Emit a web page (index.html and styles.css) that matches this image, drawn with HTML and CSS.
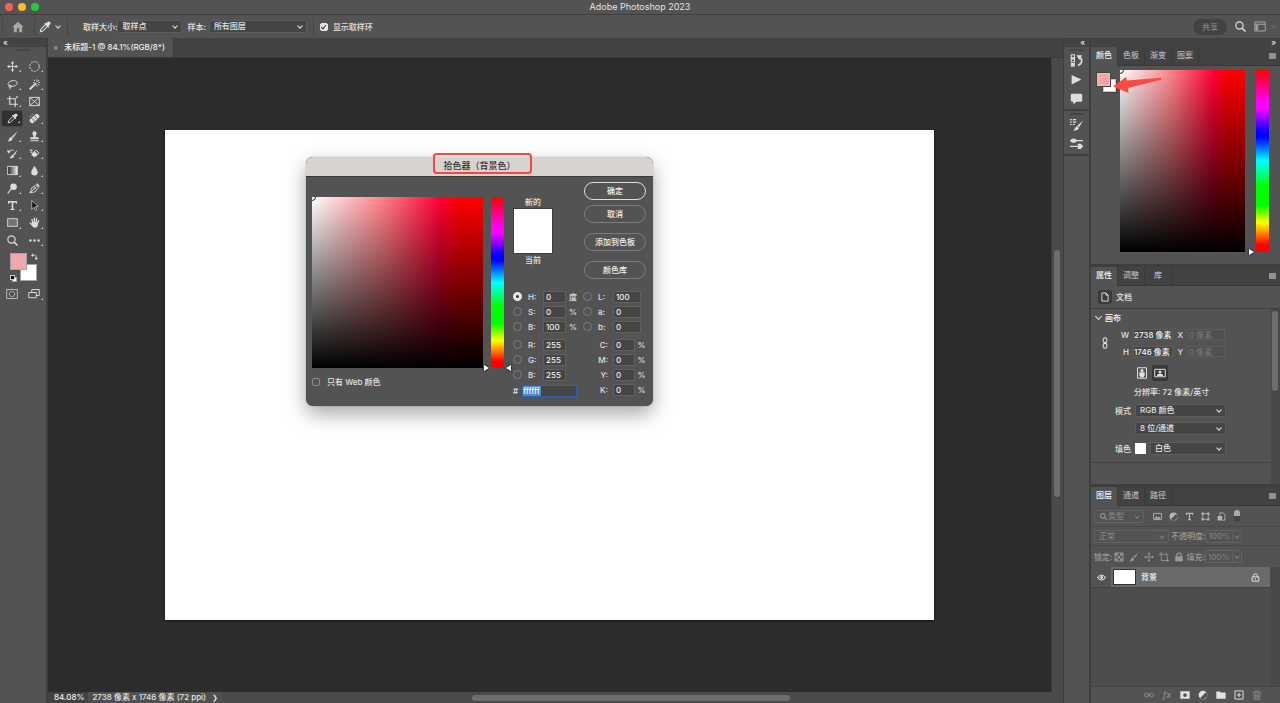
FILE: index.html
```
<!DOCTYPE html>
<html lang="zh-CN">
<head>
<meta charset="utf-8">
<title>Adobe Photoshop 2023</title>
<link rel="stylesheet" href="styles.css">
</head>
<body>
<svg class="sprite" aria-hidden="true">
  <symbol id="home" viewBox="0 0 16 16"><path fill="currentColor" d="M8 1 .5 8H2.500v7h4V9.500h3V15h4V8h2z"/></symbol>
  <symbol id="eyedropper" viewBox="0 0 16 16"><path fill="currentColor" d="M14.6 1.4a2.3 2.3 0 0 0-3.3 0L9.4 3.3l-1-.9L7 3.8 12.200 9l1.400-1.400-.9-1 1.900-1.900a2.300 2.300 0 0 0 0-3.300z"/><path fill="none" stroke="currentColor" stroke-width="1.400" d="M8.200 5.200 2.500 11l-.8 3.300 3.300-.8 5.700-5.700"/></symbol>
  <symbol id="move" viewBox="0 0 16 16"><path fill="none" stroke="currentColor" stroke-width="1.300" d="M8 2v12M2 8h12"/><path fill="currentColor" d="m8 0 2.500 3.500h-5zM8 16l2.500-3.500h-5zM0 8l3.500-2.500v5zM16 8l-3.500-2.500v5z"/></symbol>
  <symbol id="marquee" viewBox="0 0 16 16"><circle cx="8" cy="8" r="7" fill="none" stroke="currentColor" stroke-width="1.400" stroke-dasharray="3 1.400"/></symbol>
  <symbol id="lasso" viewBox="0 0 16 16"><g fill="none" stroke="currentColor" stroke-width="1.400"><path d="M5 10.500C1 10 .5 6 4 3.800 8 1.200 14.500 2 14.800 5.500 15 9 10 11.500 5.500 10.500"/><circle cx="4.500" cy="10.500" r="1.700"/><path d="M4.500 12c.8 1 .4 2.200-1 3"/></g></symbol>
  <symbol id="wand" viewBox="0 0 16 16"><path fill="none" stroke="currentColor" stroke-width="2.800" d="m1 15 9.500-9"/><path stroke="currentColor" stroke-width="1.400" d="M11.500.5v3M11.500 8.500v2.500M13.500 5H16M12.800 3.500l2-2M7 1l1.700 2M13 7l2 2M6 5.200h2"/></symbol>
  <symbol id="crop" viewBox="0 0 16 16"><path fill="none" stroke="currentColor" stroke-width="1.600" d="M4 0v12h12M0 4h12v12M13 3l3-3"/></symbol>
  <symbol id="frame" viewBox="0 0 16 16"><path fill="none" stroke="currentColor" stroke-width="1.400" d="M1 2h14v12H1zM1 2l14 12M15 2 1 14"/></symbol>
  <symbol id="heal" viewBox="0 0 16 16"><g transform="rotate(-42 8 8)"><rect x="0" y="4.500" width="16" height="7" rx="2.800" fill="currentColor"/><path d="M5 4.500v7M11 4.500v7" stroke="#535353"/><path d="M7 7h.8M9 9h.8M7 9.300h.8M9 6.800h.8" stroke="#535353"/></g><path d="M2 6c0-3 2-4 4-4" fill="none" stroke="currentColor" stroke-dasharray="1.500 1"/></symbol>
  <symbol id="brush" viewBox="0 0 16 16"><path fill="currentColor" d="M15.500.5 7 8l2 2zM6.300 8.700c-2 0-2.700 1.200-3 2.800C3 13 2 14 .5 14.500c3.200 1 7.500.2 7.700-3.800z"/></symbol>
  <symbol id="stamp" viewBox="0 0 16 16"><path fill="currentColor" d="M8 .5a3 3 0 0 0-2.500 4.800C6.400 6.700 6.500 8 6.200 9H2v3h12V9H9.800c-.3-1-.2-2.300.7-3.700A3 3 0 0 0 8 .5zM2 13.300h12V15H2z"/></symbol>
  <symbol id="history" viewBox="0 0 16 16"><path fill="currentColor" d="M15.500 2 9 9l2 1.800zM8.400 9.500c-2 .2-2 3.500-5 5 3.500 1 6.500-.3 6.800-3z"/><path d="M2 7c1-4 5-5 8-3" fill="none" stroke="currentColor" stroke-width="1.300"/><path d="m0 3 1.600 5 4-3z" fill="currentColor"/></symbol>
  <symbol id="eraser" viewBox="0 0 16 16"><path fill="none" stroke="currentColor" stroke-width="1.400" d="m5 8 5-5 4.500 4-5.500 5.500H7L4 10z"/><path fill="currentColor" d="m8 5-4 4 3 3.300h2L13 9zM1 2h4v2H1zM2 5h3v2H2z"/></symbol>
  <symbol id="gradient" viewBox="0 0 16 16"><linearGradient id="gr"><stop stop-color="#222"/><stop offset="1" stop-color="#eee"/></linearGradient><rect x="1" y="2" width="14" height="12" fill="url(#gr)" stroke="currentColor" stroke-width="1.300"/></symbol>
  <symbol id="drop" viewBox="0 0 16 16"><path fill="currentColor" d="M8 1C6 5 3.300 7.300 3.300 10.500a4.700 4.700 0 0 0 9.400 0C12.700 7.300 10 5 8 1z"/></symbol>
  <symbol id="dodge" viewBox="0 0 16 16"><circle cx="9.500" cy="5.500" r="4.800" fill="currentColor"/><path d="m6 9-5 6" stroke="currentColor" stroke-width="1.600"/></symbol>
  <symbol id="pen" viewBox="0 0 16 16"><g fill="none" stroke="currentColor" stroke-width="1.300"><path d="M1.500 14.500 4 7l6-4 3.500 3.500-4 6zM1.500 14.500 7.500 8.500"/><circle cx="8.500" cy="7.500" r="1.200"/><path d="m11 1 4 4" stroke-width="2"/></g></symbol>
  <symbol id="type" viewBox="0 0 16 16"><path fill="currentColor" d="M1.500 1.500h13v4h-1.500L12.200 3.500H9.200v9.200l1.800.5v1.300H5v-1.300l1.800-.5V3.500h-3L3 5.500H1.500z"/></symbol>
  <symbol id="pointer" viewBox="0 0 16 16"><path fill="#111" stroke="currentColor" d="M4 .8v13l3.200-3.300 2 4.500 2-1-2-4.300 4.300-.3z"/></symbol>
  <symbol id="rect" viewBox="0 0 16 16"><rect x="1" y="2.500" width="14" height="11" fill="#707070" stroke="currentColor" stroke-width="1.300"/></symbol>
  <symbol id="hand" viewBox="0 0 16 16"><path fill="none" stroke="currentColor" stroke-linecap="round" stroke-width="1.900" d="M5.500 9 4.300 3.500M7.800 8V1.500M10.300 8l.8-5.700M12.300 9.500l1.700-4.300M4.500 11.500 1.500 8.500"/><path fill="currentColor" d="M4.500 7.500h8.300l.3 2.500c0 3-1.500 5.500-4.500 5.500-2.500 0-4-1.500-5.500-4.500z"/></symbol>
  <symbol id="search" viewBox="0 0 16 16"><g fill="none" stroke="currentColor"><circle cx="6.500" cy="6.500" r="5.300" stroke-width="1.700"/><path stroke-width="2.200" d="m10.300 10.300 5 5"/></g></symbol>
  <symbol id="dots" viewBox="0 0 16 16"><g fill="currentColor"><circle cx="2" cy="8" r="1.800"/><circle cx="8" cy="8" r="1.800"/><circle cx="14" cy="8" r="1.800"/></g></symbol>
  <symbol id="mask" viewBox="0 0 16 16"><g fill="none" stroke="currentColor"><rect x="1" y="2" width="14" height="12"/><circle cx="8" cy="8" r="3.500" stroke-dasharray="1.500 .7" stroke-width="1.300"/></g></symbol>
  <symbol id="screens" viewBox="0 0 16 16"><g stroke="currentColor" stroke-width="1.300" fill="#535353"><path d="M5 2h10v8H5z"/><path d="M1 6h10v7H1z"/></g></symbol>
  <symbol id="swap" viewBox="0 0 16 16"><path fill="none" stroke="currentColor" stroke-width="1.800" d="M4 5h4q4 0 4 5v2"/><path fill="currentColor" d="M0 5 5 1v8zM12 16l-4-5h8z"/></symbol>
  <symbol id="workspace" viewBox="0 0 16 14"><path fill="none" stroke="currentColor" stroke-width="1.300" d="M1 1h14v12H1zM1 4h14M5 4v9"/><path fill="currentColor" d="M2 5h2v7H2z"/></symbol>
  <symbol id="histpanel" viewBox="0 0 16 16"><path fill="none" stroke="currentColor" stroke-width="1.300" d="M1.500 1h4v3.500h-4zM1.500 6h4v3.500h-4z"/><path fill="currentColor" d="M1 11h5v4.500H1z"/><path fill="none" stroke="currentColor" stroke-width="2" d="M10 14c6-2 5-8 2-10"/><path fill="currentColor" d="M8 1.500h7l-3.500 6z"/></symbol>
  <symbol id="play" viewBox="0 0 16 16"><path fill="currentColor" d="M2 2.500 14 8 2 14z"/></symbol>
  <symbol id="comment" viewBox="0 0 16 16"><path fill="currentColor" d="M2.500 2h11q1.500 0 1.500 1.500v7q0 1.500-1.500 1.500H8l-4 3.500V12H2.500Q1 12 1 10.500v-7Q1 2 2.500 2z"/></symbol>
  <symbol id="brushset" viewBox="0 0 16 16"><path fill="currentColor" d="M16 3 9 9.500l2.200 2zM8.700 10c-2.200.2-2 3.300-4.700 5 3.500 1 6.700-.3 6.700-3z"/><path stroke="currentColor" stroke-width="1.400" d="M0 2h2M3.500 2h4M0 5h2M3.500 5h4M0 8h2M3.500 8h2.500"/></symbol>
  <symbol id="sliders" viewBox="0 0 16 16"><path stroke="currentColor" stroke-width="1.700" d="M0 4.500h16M0 11.500h16"/><ellipse cx="4.500" cy="4.500" rx="3.500" ry="2.600" fill="currentColor"/><path fill="currentColor" d="M9 8.300h4.500l2.500 3.200-2.500 3.200H9l1.500-3.200z"/></symbol>
  <symbol id="doc" viewBox="0 0 16 16"><path fill="none" stroke="currentColor" stroke-width="1.500" d="M3 1.500h6.500L13 5v9.500H3zM9.500 1.500V5H13"/></symbol>
  <symbol id="link" viewBox="0 0 10 16"><g fill="none" stroke="currentColor" stroke-width="1.400"><rect x="2.500" y="1" width="5" height="6.500" rx="2.500"/><rect x="2.500" y="8.500" width="5" height="6.500" rx="2.500"/></g></symbol>
  <symbol id="portrait" viewBox="0 0 16 16"><path fill="none" stroke="currentColor" stroke-width="1.300" d="M2 1h12v14H2z"/><circle cx="8" cy="4.800" r="2" fill="currentColor"/><path fill="currentColor" d="M4.500 7h7v5h-1v2h-5v-2h-1z"/></symbol>
  <symbol id="landscape" viewBox="0 0 16 16"><path fill="none" stroke="currentColor" stroke-width="1.300" d="M1 3h14v10H1z"/><circle cx="8" cy="6.500" r="1.900" fill="currentColor"/><path fill="currentColor" d="M4 12q0-3.500 4-3.500t4 3.500z"/></symbol>
  <symbol id="image" viewBox="0 0 16 16"><path fill="none" stroke="currentColor" stroke-width="1.500" d="M1 2.500h14v11H1z"/><path fill="currentColor" d="m3 12 3-5 2.500 3L11 8l2 4z"/></symbol>
  <symbol id="adjust" viewBox="0 0 16 16"><circle cx="8" cy="8" r="7" fill="currentColor"/><path fill="#535353" d="M12.600 3.400A6.500 6.500 0 0 1 3.400 12.600z"/></symbol>
  <symbol id="shape" viewBox="0 0 16 16"><path fill="none" stroke="currentColor" stroke-width="1.400" d="M3 3h10v10H3z"/><path fill="currentColor" d="M1 1h4v4H1zM11 1h4v4h-4zM1 11h4v4H1zM11 11h4v4h-4z"/></symbol>
  <symbol id="smart" viewBox="0 0 16 16"><path fill="none" stroke="currentColor" stroke-width="1.500" d="M5 6V1.500h6L14 4.500v10H9"/><path fill="currentColor" d="M1 7h8v8H1z"/></symbol>
  <symbol id="checker" viewBox="0 0 16 16"><path fill="none" stroke="currentColor" stroke-width="1.400" d="M1.500 1.500h13v13h-13z"/><path fill="currentColor" d="M2 2h4v4H2zM10 2h4v4h-4zM6 6h4v4H6zM2 10h4v4H2zM10 10h4v4h-4z"/></symbol>
  <symbol id="artboard" viewBox="0 0 16 16"><path fill="none" stroke="currentColor" stroke-width="1.400" d="M3.500 0v13.500H16M0 3.500h9l4.500 4V16M12 1v3h3"/></symbol>
  <symbol id="lock" viewBox="0 0 16 16"><path fill="none" stroke="currentColor" stroke-width="1.800" d="M4.500 8V5a3.500 3.500 0 0 1 7 0v3"/><path fill="currentColor" d="M2 7h12v8H2z"/></symbol>
  <symbol id="lockline" viewBox="0 0 16 16"><path fill="none" stroke="currentColor" stroke-width="1.500" d="M4.500 7V5a3.500 3.500 0 0 1 7 0v2M2 7h12v7.500H2zM8 9.500v2.500"/></symbol>
  <symbol id="eye" viewBox="0 0 16 16"><path fill="none" stroke="currentColor" stroke-width="1.900" d="M1 8Q8-1 15 8 8 17 1 8z"/><circle cx="8" cy="8" r="2.500" fill="currentColor"/></symbol>
  <symbol id="chain" viewBox="0 0 16 16"><g fill="none" stroke="currentColor" stroke-width="1.500"><rect x=".8" y="5" width="6.500" height="6" rx="3"/><rect x="8.700" y="5" width="6.500" height="6" rx="3"/><path d="M5 8h6"/></g></symbol>
  <symbol id="addmask" viewBox="0 0 16 16"><path fill="currentColor" fill-rule="evenodd" d="M.5 2h15v12H.5zM11 8a3 3 0 1 0-6 0 3 3 0 0 0 6 0z"/></symbol>
  <symbol id="folder" viewBox="0 0 16 16"><path fill="currentColor" d="M.5 2.500h5.500L7.500 4h8v10H.5z"/></symbol>
  <symbol id="plus" viewBox="0 0 16 16"><path fill="none" stroke="currentColor" stroke-width="1.500" d="M1.500 1.500h13v13h-13zM8 4.500v7M4.500 8h7"/></symbol>
  <symbol id="trash" viewBox="0 0 16 16"><path fill="none" stroke="currentColor" stroke-width="1.400" d="M1.500 3.500h13M5.500 3V1.500h5V3M3 4l.8 11h8.400L13 4M6 6v7M8 6v7M10 6v7"/></symbol>
</svg>

<div class="app">
  <header class="titlebar">
    <div class="lights"><i class="light red"></i><i class="light amber"></i><i class="light green"></i></div>
    <h1>Adobe Photoshop 2023</h1>
  </header>

  <div class="options">
    <button class="home" aria-label="主页"><svg><use href="#home"/></svg></button>
    <button class="current-tool" aria-label="吸管"><svg><use href="#eyedropper"/></svg><i class="chev"></i></button>
    <label for="size">取样大小:</label>
    <span class="pick w-size"><select id="size"><option>取样点</option></select></span>
    <label for="sample" class="gap-left">样本:</label>
    <span class="pick w-sample"><select id="sample"><option>所有图层</option></select></span>
    <label class="ring"><input type="checkbox" class="tick" checked>显示取样环</label>
    <span class="grow"></span>
    <button class="share">共享</button>
    <button class="plain" aria-label="搜索"><svg><use href="#search"/></svg></button>
    <button class="plain dim" aria-label="工作区"><svg><use href="#workspace"/></svg><i class="chev"></i></button>
  </div>

  <div class="main">
    <aside class="tools">
      <div class="strip"><span>«</span></div>
      <div class="grip"></div>
      <div class="toolgrid">
        <button aria-label="移动"><svg><use href="#move"/></svg></button><button aria-label="选框"><svg><use href="#marquee"/></svg></button>
        <button aria-label="套索"><svg><use href="#lasso"/></svg></button><button aria-label="魔棒"><svg><use href="#wand"/></svg></button>
        <button aria-label="裁剪"><svg><use href="#crop"/></svg></button><button aria-label="图框" class="single"><svg><use href="#frame"/></svg></button>
        <button aria-label="吸管" class="active"><svg><use href="#eyedropper"/></svg></button><button aria-label="修复"><svg><use href="#heal"/></svg></button>
        <button aria-label="画笔"><svg><use href="#brush"/></svg></button><button aria-label="图章"><svg><use href="#stamp"/></svg></button>
        <button aria-label="历史画笔"><svg><use href="#history"/></svg></button><button aria-label="橡皮擦"><svg><use href="#eraser"/></svg></button>
        <button aria-label="渐变"><svg><use href="#gradient"/></svg></button><button aria-label="模糊"><svg><use href="#drop"/></svg></button>
        <button aria-label="减淡"><svg><use href="#dodge"/></svg></button><button aria-label="钢笔"><svg><use href="#pen"/></svg></button>
        <button aria-label="文字"><svg><use href="#type"/></svg></button><button aria-label="路径选择"><svg><use href="#pointer"/></svg></button>
        <button aria-label="矩形"><svg><use href="#rect"/></svg></button><button aria-label="抓手"><svg><use href="#hand"/></svg></button>
        <button aria-label="缩放" class="single"><svg><use href="#search"/></svg></button><button aria-label="更多"><svg><use href="#dots"/></svg></button>
      </div>
      <div class="colors"><i class="back"></i><i class="fore"></i><svg class="swap"><use href="#swap"/></svg><i class="mini-back"></i><i class="mini-fore"></i></div>
      <div class="modes"><button class="single" aria-label="快速蒙版"><svg><use href="#mask"/></svg></button><button aria-label="屏幕模式"><svg><use href="#screens"/></svg></button></div>
    </aside>

    <section class="document">
      <div class="doctabs"><div class="doctab"><button aria-label="关闭">×</button>未标题-1 @ 84.1%(RGB/8*)</div></div>
      <div class="workarea">
        <div class="canvas"><div class="paper"></div></div>
        <div class="vscroll"><i></i></div>
      </div>
      <footer class="status"><span class="zoom">84.08%</span><span class="info">2738 像素 x 1746 像素 (72 ppi)<b>❯</b></span><div class="hscroll"><i></i></div></footer>
    </section>

    <aside class="rail">
      <div class="strip right"><span>«</span></div>
      <div class="railgroup">
        <div class="grip"></div>
        <button aria-label="历史记录"><svg><use href="#histpanel"/></svg></button>
        <button aria-label="动作"><svg><use href="#play"/></svg></button>
        <button aria-label="注释"><svg><use href="#comment"/></svg></button>
      </div>
      <div class="railgroup">
        <div class="grip"></div>
        <button aria-label="画笔设置"><svg><use href="#brushset"/></svg></button>
        <button aria-label="画笔"><svg><use href="#sliders"/></svg></button>
      </div>
      <div class="railrest"></div>
    </aside>

    <aside class="panels">
      <div class="strip right"><span>»</span></div>
      <section class="panel">
        <nav class="tabs"><button class="on">颜色</button><button>色板</button><button>渐变</button><button>图案</button><i class="menu"></i></nav>
        <div class="colorbody">
          <div class="pair"><i class="back"></i><i class="fore"></i><svg class="arrow" viewBox="0 0 50 16"><path d="M0 9.500 13 0l1 3.500L48 .8v2L15 11l.5 5z"/></svg></div>
          <div class="field"><i class="ringmark"></i></div>
          <div class="hue"><i class="knob"></i></div>
        </div>
      </section>

      <section class="panel">
        <nav class="tabs"><button class="on">属性</button><button>调整</button><button>库</button><i class="menu"></i></nav>
        <div class="dochead"><span class="docicon"><svg><use href="#doc"/></svg></span>文档</div>
        <div class="props">
          <div class="propbody">
            <h2><i class="chev"></i>画布</h2>
            <div class="dims">
              <svg class="dimlink"><use href="#link"/></svg>
              <label for="cw">W</label><input id="cw" value="2738 像素"><label for="cx">X</label><input id="cx" value="0 像素" disabled>
              <label for="ch">H</label><input id="ch" value="1746 像素"><label for="cy">Y</label><input id="cy" value="0 像素" disabled>
            </div>
            <div class="orient"><button aria-label="纵向"><svg><use href="#portrait"/></svg></button><button class="on" aria-label="横向"><svg><use href="#landscape"/></svg></button></div>
            <p>分辨率: 72 像素/英寸</p>
            <div class="proprow"><label for="mode">模式</label><span class="pick"><select id="mode"><option>RGB 颜色</option></select></span></div>
            <div class="proprow"><span></span><span class="pick"><select aria-label="位深"><option>8 位/通道</option></select></span></div>
            <div class="proprow last"><label for="fill">填色</label><i class="chip"></i><span class="pick"><select id="fill"><option>白色</option></select></span></div>
          </div>
          <div class="pscroll"><i></i></div>
        </div>
      </section>

      <section class="panel layers">
        <nav class="tabs"><button class="on">图层</button><button>通道</button><button>路径</button><i class="menu"></i></nav>
        <div class="lrow filter">
          <span class="pick faint w-type"><svg><use href="#search"/></svg><select aria-label="筛选"><option>类型</option></select></span>
          <svg><use href="#image"/></svg><svg><use href="#adjust"/></svg><svg><use href="#type"/></svg><svg><use href="#shape"/></svg><svg><use href="#smart"/></svg><i class="toggle"></i>
        </div>
        <div class="lrow">
          <span class="pick faint w-blend"><select aria-label="混合模式"><option>正常</option></select></span>
          <label for="op">不透明度:</label><span class="pick faint split"><input id="op" value="100%" disabled></span>
        </div>
        <div class="lrow locks">
          <span class="lockname">锁定:</span><svg><use href="#checker"/></svg><svg><use href="#brush"/></svg><svg><use href="#move"/></svg><svg><use href="#artboard"/></svg><svg><use href="#lock"/></svg>
          <label for="fo">填充:</label><span class="pick faint split"><input id="fo" value="100%" disabled></span>
        </div>
        <div class="list">
          <div class="layer"><span class="vis"><svg><use href="#eye"/></svg></span><div class="layername"><i class="thumb"></i>背景<svg><use href="#lockline"/></svg></div></div>
        </div>
        <div class="actions">
          <button class="off" aria-label="链接"><svg><use href="#chain"/></svg></button><button class="off fx">fx</button><button aria-label="蒙版"><svg><use href="#addmask"/></svg></button><button aria-label="调整图层"><svg><use href="#adjust"/></svg></button><button aria-label="新建组"><svg><use href="#folder"/></svg></button><button aria-label="新建图层"><svg><use href="#plus"/></svg></button><button class="off" aria-label="删除"><svg><use href="#trash"/></svg></button>
        </div>
      </section>
    </aside>
  </div>

  <form class="dialog" role="dialog" aria-labelledby="dlg">
    <div class="dlgtitle"><h2 id="dlg">拾色器（背景色）</h2><i class="callout"></i></div>
    <div class="dlgbody">
      <div class="choose">
        <div class="spectrum">
          <div class="field"><i class="ringmark"></i></div>
          <div class="hue"><i class="knob"></i><i class="knob far"></i></div>
        </div>
        <label class="web"><input type="checkbox" class="tick">只有 Web 颜色</label>
      </div>
      <div class="details">
        <div class="upper">
          <div class="preview"><span>新的</span><i></i><span>当前</span></div>
          <div class="buttons"><button type="button" class="primary">确定</button><button type="button">取消</button><button type="button" class="spaced">添加到色板</button><button type="button" class="spaced">颜色库</button></div>
        </div>
        <div class="values">
          <div class="col">
            <div class="v"><input type="radio" name="c" id="rh" checked><label for="rh">H:</label><input class="num" value="0" aria-label="H"><span>度</span></div>
            <div class="v"><input type="radio" name="c" id="rs"><label for="rs">S:</label><input class="num" value="0" aria-label="S"><span>%</span></div>
            <div class="v"><input type="radio" name="c" id="rb"><label for="rb">B:</label><input class="num" value="100" aria-label="B"><span>%</span></div>
            <div class="v split-top"><input type="radio" name="c" id="rr"><label for="rr">R:</label><input class="num" value="255" aria-label="R"></div>
            <div class="v"><input type="radio" name="c" id="rg"><label for="rg">G:</label><input class="num" value="255" aria-label="G"></div>
            <div class="v"><input type="radio" name="c" id="rbl"><label for="rbl">B:</label><input class="num" value="255" aria-label="B"></div>
            <div class="hex"><label for="hex">#</label><div class="hexbox"><input id="hex" value="ffffff"></div></div>
          </div>
          <div class="col">
            <div class="v lab"><input type="radio" name="c" id="rl"><label for="rl">L:</label><input class="num" value="100" aria-label="L"></div>
            <div class="v lab"><input type="radio" name="c" id="ra"><label for="ra">a:</label><input class="num" value="0" aria-label="a"></div>
            <div class="v lab"><input type="radio" name="c" id="rlb"><label for="rlb">b:</label><input class="num" value="0" aria-label="b"></div>
            <div class="v ink split-top"><label for="ic">C:</label><input class="num" id="ic" value="0"><span>%</span></div>
            <div class="v ink"><label for="im">M:</label><input class="num" id="im" value="0"><span>%</span></div>
            <div class="v ink"><label for="iy">Y:</label><input class="num" id="iy" value="0"><span>%</span></div>
            <div class="v ink"><label for="ik">K:</label><input class="num" id="ik" value="0"><span>%</span></div>
          </div>
        </div>
      </div>
    </div>
  </form>
</div>
</body>
</html>
```

FILE: styles.css
```
* { box-sizing: border-box; }
body, h1, h2, p { margin: 0; font-size: inherit; font-weight: inherit; }
body {
  background: #535353;
  color: #e2e2e2;
  font: 500 8px/12px Inter, "Noto Sans CJK SC", sans-serif;
}
button, input, select { font: inherit; color: inherit; margin: 0; padding: 0; border: 0; background: none; border-radius: 0; min-width: 0; }
select { appearance: none; outline: none; }
i { display: block; font-style: normal; }
svg { display: block; width: 12px; height: 12px; flex: none; }
.sprite { position: absolute; width: 0; height: 0; }
.grow { flex: 1; }

.app { min-height: 100vh; display: flex; flex-direction: column; position: relative; overflow: hidden; }

/* Title bar */
.titlebar { height: 15px; display: grid; grid-template-columns: 1fr auto 1fr; align-items: center; border-bottom: 1px solid #3e3e3e; }
.titlebar h1 { font-size: 9px; font-weight: 400; color: #e6e6e6; }
.lights { display: flex; gap: 5px; padding-left: 5px; }
.light { width: 8px; height: 8px; border-radius: 50%; }
.red { background: #ff5f57; }
.amber { background: #febc2e; }
.green { background: #28c840; }

/* Options bar */
.options { height: 23px; display: flex; align-items: center; padding: 0 4px 0 2px; }
.home { width: 33px; height: 17px; display: flex; align-items: center; padding-left: 9px; border-left: 1px solid #474747; border-right: 1px solid #444; color: #a8a8a8; }
.current-tool { width: 33px; height: 17px; display: flex; align-items: center; gap: 5px; padding-left: 4px; border-right: 1px solid #444; margin-right: 15px; }
.chev { width: 4px; height: 4px; border: solid currentColor; border-width: 0 1px 1px 0; transform: rotate(45deg); margin-top: -2px; flex: none; }
.gap-left { margin-left: 5px; }
.pick { position: relative; display: flex; align-items: center; height: 13px; border: 1px solid #5d5d5d; border-radius: 2px; background: #454545; }
.pick::after { content: ""; position: absolute; right: 4px; top: 3px; width: 3px; height: 3px; border: solid currentColor; border-width: 0 1px 1px 0; transform: rotate(45deg); pointer-events: none; }
.pick select { flex: 1; height: 11px; line-height: 11px; padding: 0 10px 0 4px; }
.w-size { width: 65px; }
.w-sample { width: 98px; margin-left: 3px; }
.tick { appearance: none; width: 8px; height: 8px; border: 1px solid #8b8b8b; border-radius: 2px; display: grid; place-items: center; }
.tick:checked { background: #e8e8e8; border-color: #e8e8e8; }
.tick:checked::after { content: ""; width: 2px; height: 4px; border: solid #333; border-width: 0 1px 1px 0; transform: rotate(40deg); }
.ring { display: flex; align-items: center; gap: 5px; margin-left: 6px; padding-left: 6px; height: 17px; border-left: 1px solid #444; }
.share { width: 34px; height: 16px; border-radius: 8px; background: #424242; color: #858585; margin-right: 8px; }
.plain { padding: 0; margin-right: 8px; }
.plain svg { width: 11px; height: 11px; }
.dim { color: #a6a6a6; margin-right: 0; display: flex; align-items: center; gap: 6px; }
.dim svg { width: 12px; }
.dim .chev { color: #6f6f6f; }

.main { flex: 1; display: flex; background: #3e3e3e; }
.strip { height: 9px; background: #434343; line-height: 7px; font-size: 8px; padding-left: 3px; border-top: 1px solid #3e3e3e; }
.strip.right { text-align: right; padding-right: 4px; }
.grip { width: 14px; height: 2px; background: #464646; margin: 2px auto 0; }

/* Tool column */
.tools { width: 46px; background: #535353; margin-right: 2px; }
.toolgrid { display: grid; grid-template-columns: 22px 22px; grid-template-rows: repeat(11, 1fr); height: 191px; margin: 7px 0 0 1px; }
.toolgrid button, .modes button { display: grid; place-items: center; position: relative; color: #dcdcdc; }
.toolgrid svg { width: 11px; height: 11px; }
.toolgrid button::after, .modes button::after { content: ""; position: absolute; right: 2px; bottom: 3px; border: 1px solid; border-color: transparent #d0d0d0 #d0d0d0 transparent; }
.toolgrid .single::after, .modes .single::after { display: none; }
.toolgrid .active { background: #303030; border-radius: 2px; box-shadow: 0 0 0 1px #474747; margin: 1px; }
.colors { position: relative; height: 30px; margin: 4px 0 0 10px; }
.colors i { position: absolute; border: 1px solid #a5a5a5; background: #fff; }
.colors .fore { width: 17px; height: 17px; left: 0; top: 0; background: #f0a8ad; }
.colors .back { width: 17px; height: 17px; left: 10px; top: 11px; }
.colors .swap { position: absolute; left: 21px; top: 0; width: 7px; height: 7px; }
.colors .mini-back { left: 2px; top: 24px; width: 5px; height: 5px; }
.colors .mini-fore { left: 0; top: 22px; width: 5px; height: 5px; background: #111; border-color: #ccc; }
.modes { display: grid; grid-template-columns: 22px 22px; height: 18px; margin: 2px 0 0 1px; }

/* Document */
.document { flex: 1; min-width: 0; display: flex; flex-direction: column; }
.doctabs { height: 20px; background: #424242; display: flex; border-bottom: 1px solid #393939; }
.doctab { background: #535353; display: flex; align-items: center; gap: 6px; padding: 0 8px 1px 5px; border-right: 1px solid #393939; color: #f0f0f0; }
.doctab button { color: #aaa; }
.workarea { flex: 1; display: flex; }
.canvas { flex: 1; background: #2c2c2c; padding: 72px 117px; display: flex; }
.paper { flex: 1; background: #fff; box-shadow: 0 1px 2px #111; }
.vscroll { width: 12px; background: #4a4a4a; border-left: 1px solid #3e3e3e; padding: 192px 3px 0 2px; }
.vscroll i { height: 247px; border-radius: 3px; background: #6d6d6d; }
.status { height: 11px; display: flex; align-items: center; line-height: 11px; background: #4a4a4a; }
.zoom { padding: 0 4px 0 6px; background: #424242; color: #f0f0f0; }
.info { display: flex; gap: 6px; padding: 0 4px; background: #505050; }
.info b { font-size: 7px; font-weight: 400; }
.hscroll { flex: 1; display: flex; justify-content: center; padding-right: 24px; }
.hscroll i { width: 318px; height: 6px; border-radius: 3px; background: #6d6d6d; }

/* Icon rail */
.rail { width: 25px; display: flex; flex-direction: column; margin: 0 2px 0 1px; }
.railgroup { background: #535353; border-bottom: 2px solid #3e3e3e; padding-bottom: 1px; }
.railgroup button { display: grid; place-items: center; width: 100%; height: 19px; color: #dedede; }
.railgroup svg { width: 13px; height: 13px; }
.railrest { flex: 1; background: #535353; }

/* Right panels */
.panels { width: 189px; display: flex; flex-direction: column; }
.panel { background: #535353; margin-bottom: 3px; }
.tabs { height: 19px; display: flex; background: #424242; border-bottom: 1px solid #393939; }
.tabs button { padding: 0 0 2px; border-right: 1px solid #393939; color: #b4b4b4; width: 27px; text-align: center; white-space: nowrap; }
.tabs .on { background: #535353; color: #f2f2f2; height: 19px; padding-bottom: 3px; }
.menu { margin: 6px 4px 0 auto; width: 7px; height: 6px; background: #929292; }
.colorbody { display: flex; padding: 4px 11px 12px 5px; }
.pair { position: relative; width: 24px; flex: none; }
.pair i { position: absolute; width: 13px; height: 13px; border: 1px solid #ccc; outline: 1px solid #444; background: #fff; }
.pair .fore { left: 1px; top: 3px; background: #f0a8ad; }
.pair .back { left: 7px; top: 9px; }
.pair .arrow { position: absolute; z-index: 2; left: 17px; top: 7px; width: 50px; height: 16px; fill: #fa4a42; }
.field { position: relative; flex: 1; overflow: hidden; background: linear-gradient(transparent, #000), linear-gradient(90deg, #fff, #ff8087 42%, #ff0035 75%, #f00 86%); }
.ringmark { position: absolute; left: -4px; top: -4px; width: 8px; height: 8px; border: 1px solid #222; border-radius: 50%; }
.hue { position: relative; width: 13px; background: linear-gradient(#f00, #f0f 18%, #f0f 21%, #00f 34%, #00f 37%, #0ff 50%, #0f0 64%, #0f0 74%, #ff0 84%, #f00 96%); }
.knob { position: absolute; left: -7px; bottom: -3px; border: solid transparent; border-width: 3px 0 3px 5px; border-left-color: #fff; filter: drop-shadow(0 0 1px #000); }
.knob.far { left: auto; right: -7px; border-width: 3px 5px 3px 0; border-right-color: #fff; }
.colorbody .field { height: 182px; margin-right: 11px; }

.dochead { display: flex; align-items: center; gap: 4px; height: 23px; padding-left: 7px; border-bottom: 1px solid #424242; }
.docicon { width: 14px; height: 14px; background: #3c3c3c; border-radius: 2px; display: grid; place-items: center; }
.docicon svg { width: 10px; height: 10px; }
.props { display: flex; }
.propbody { flex: 1; height: 154px; border-bottom: 1px solid #424242; padding-top: 2px; }
.propbody h2 { display: flex; align-items: center; gap: 4px; padding-left: 5px; font-weight: 700; height: 13px; }
.propbody h2 .chev { width: 5px; height: 5px; }
.pscroll { width: 9px; background: #484848; padding: 2px 2px 0 1px; height: 175px; }
.pscroll i { height: 80px; border-radius: 3px; background: #6d6d6d; }
.dims { display: grid; grid-template-columns: 20px 18px 40px 14px 38px; grid-template-rows: 13px 13px; row-gap: 4px; column-gap: 0; align-items: center; margin-top: 4px; padding-left: 4px; }
.dimlink { grid-row: 1 / 3; width: 10px; height: 12px; justify-self: center; }
.dims label { text-align: right; padding-right: 4px; }
.dims input { width: 100%; height: 11px; border: 1px solid #5c5c5c; background: #454545; padding: 0; color: #f2f2f2; }
.dims input:disabled { background: #505050; color: #747474; padding-left: 1px; }
.orient { display: flex; gap: 2px; padding: 7px 0 5px 43px; }
.orient button { width: 16px; height: 16px; display: grid; place-items: center; border-radius: 2px; }
.orient .on { background: #383838; }
.propbody p { padding-left: 43px; margin-bottom: 6px; }
.proprow { display: grid; grid-template-columns: 40px 91px; column-gap: 4px; margin-bottom: 5px; align-items: center; }
.proprow label { text-align: right; }
.proprow.last { grid-template-columns: 40px 11px 76px; margin-top: 7px; }
.chip { height: 11px; background: #fff; }

.layers { flex: 1; display: flex; flex-direction: column; margin: 0; }
.lrow { height: 19px; display: flex; align-items: center; padding: 0 3px; border-bottom: 1px solid #484848; color: #999; white-space: nowrap; }
.lrow svg { width: 9px; height: 9px; }
.faint { background: #535353; border-color: #626262; color: #808080; }
.filter { height: 21px; gap: 7px; color: #b6b6b6; }
.w-type { width: 50px; padding-left: 5px; margin-right: 2px; }
.w-type select { padding-left: 1px; }
.w-type svg { width: 7px; height: 7px; color: #bbb; }
.toggle { width: 6px; height: 12px; border-radius: 3px; background: linear-gradient(#aaa 6px, #444 6px); margin-left: 1px; }
.w-blend { width: 75px; margin-right: 2px; }
.split { width: 37px; }
.split input { width: 27px; border-right: 1px solid #626262; height: 11px; padding-left: 2px; }
.split::after { right: 2px; }
.locks { height: 21px; gap: 5px; border: 0; }
.locks svg { width: 10px; height: 10px; }
.lockname { margin-right: -3px; }
.locks label { margin-left: -3px; }
.locks .split { margin-left: -5px; }
.list { flex: 1; background: #4d4d4d; border-right: 10px solid #494949; }
.layer { display: flex; height: 21px; border-bottom: 1px solid #444; }
.vis { width: 20px; display: grid; place-items: center; background: #535353; }
.vis svg { width: 9px; height: 9px; }
.layername { flex: 1; display: flex; align-items: center; background: #6a6a6a; padding: 0 10px 0 3px; gap: 6px; color: #f4f4f4; }
.layername svg { margin-left: auto; width: 9px; height: 9px; }
.thumb { width: 21px; height: 14px; background: #fff; outline: 1px solid #333; }
.actions { height: 17px; display: flex; justify-content: flex-end; gap: 6px; padding-right: 17px; border-top: 1px solid #444; }
.actions button { width: 12px; display: grid; place-items: center; }
.actions svg { width: 10px; height: 10px; }
.actions .off { color: #8b8b8b; }
.fx { font-style: italic; font-size: 9px; }

/* Colour picker window */
.dialog { position: absolute; left: 306px; top: 157px; width: 347px; border-radius: 7px; background: #535353; box-shadow: 0 8px 20px rgba(0,0,0,.35), 0 0 1px rgba(0,0,0,.5); }
.dlgtitle { position: relative; height: 20px; background: #d8d2d0; border-radius: 7px 7px 0 0; border-bottom: 1px solid #3a3a3a; color: #333; text-align: center; padding-top: 3px; }
.dlgtitle h2 { font-size: 9px; }
.callout { position: absolute; left: 127px; top: -4px; width: 99px; height: 21px; border: 2px solid #f54640; border-radius: 4px; }
.dlgbody { display: flex; gap: 9px; padding: 5px 7px 6px 6px; }
.choose { padding-top: 15px; }
.spectrum { display: flex; gap: 8px; }
.dialog .field { flex: none; width: 171px; height: 171px; }
.web { display: flex; align-items: center; gap: 7px; margin-top: 8px; }
.details { flex: 1; }
.upper { display: flex; justify-content: space-between; }
.preview { width: 40px; padding-top: 14px; text-align: center; }
.preview i { height: 46px; background: #fff; border: 1px solid #3e3e3e; }
.buttons { display: flex; flex-direction: column; gap: 5px; width: 62px; }
.buttons button { height: 18px; border: 1px solid #7c7c7c; border-radius: 9px; color: #f0f0f0; line-height: 14px; }
.buttons .primary { border-color: #ddd; }
.buttons .spaced { margin-top: 5px; }
.values { display: flex; gap: 5px; margin-top: 10px; }
.col { display: flex; flex-direction: column; }
.v { display: grid; grid-template-columns: 15px 15px 23px 12px; height: 15px; align-items: center; }
.v span { text-align: center; margin-left: 2px; }
.v input[type=radio] { appearance: none; width: 9px; height: 9px; border: 1px solid #7d7d7d; border-radius: 50%; }
.v input[type=radio]:checked { border: 3px solid #e6e6e6; background: #333; }
.num { height: 12px; border: 1px solid #606060; background: #454545; padding: 0 2px; color: #f0f0f0; }
.split-top { margin-top: 3px; }
.lab { grid-template-columns: 15px 15px 28px; }
.ink { grid-template-columns: 30px 22px 11px; }
.ink label { text-align: right; padding-right: 5px; }
.hex { display: flex; align-items: center; gap: 4px; height: 18px; }
.hexbox { width: 55px; height: 12px; border: 1px solid #2a62b0; background: #454545; }
.hexbox input { display: block; width: 18px; height: 10px; line-height: 10px; background: #4a8ad0; color: #fff; }
```
